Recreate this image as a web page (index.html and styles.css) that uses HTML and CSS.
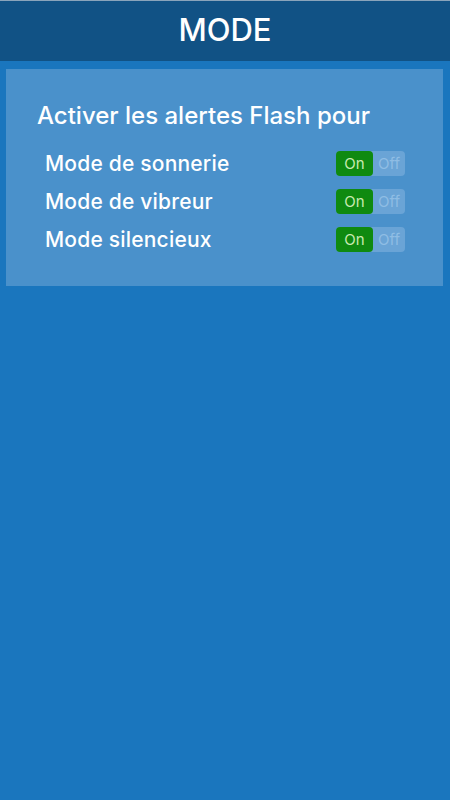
FILE: index.html
```html
<!DOCTYPE html>
<html lang="fr">
<head>
    <meta charset="UTF-8">
    <meta name="viewport" content="width=device-width, initial-scale=1.0">
    <title>Mode</title>
    <link rel="stylesheet" href="styles.css">
</head>
<body>

<div class="header">MODE</div>

<div class="panel">
    <h2>Activer les alertes Flash pour</h2>

    <div class="row">
        <span class="label">Mode de sonnerie</span>
        <div class="toggle"><span class="on">On</span><span class="off">Off</span></div>
    </div>
    <div class="row">
        <span class="label">Mode de vibreur</span>
        <div class="toggle"><span class="on">On</span><span class="off">Off</span></div>
    </div>
    <div class="row">
        <span class="label">Mode silencieux</span>
        <div class="toggle"><span class="on">On</span><span class="off">Off</span></div>
    </div>
</div>

</body>
</html>
```

FILE: styles.css
```css
body {
    margin: 0;
    background-color: #1a76be;
    font-family: Inter, "Liberation Sans", Arial, sans-serif;
    color: white;
    height: 800px;
}

.header {
    height: 61px;
    line-height: 57px;
    background-color: #115285;
    border-top: 1px solid #8aa4bb;
    box-sizing: border-box;
    text-align: center;
    font-size: 31px;
    font-weight: 500;
}

.panel {
    margin: 8px 7px 0 6px;
    height: 217px;
    box-sizing: border-box;
    background-color: #4a91cb;
    padding: 32px 38px 0 31px;
}

h2 {
    font-weight: 500;
    font-size: 24px;
    line-height: 30px;
    margin: 0 0 13px;
}

.row {
    display: flex;
    align-items: center;
    justify-content: space-between;
    height: 38px;
    padding-left: 8px;
}

.label {
    font-size: 21px;
    font-weight: 500;
    letter-spacing: 0.2px;
}

.toggle {
    display: flex;
    width: 69px;
    height: 25px;
    border-radius: 4px;
    background-color: #6aa4d6;
    font-size: 15px;
    font-weight: 400;
}

.toggle span {
    display: flex;
    align-items: center;
    justify-content: center;
}

.on {
    width: 37px;
    background-color: #0f8a10;
    border-radius: 4px;
    color: #c8eab0;
}

.off {
    flex: 1;
    color: #8fbde4;
}
```
